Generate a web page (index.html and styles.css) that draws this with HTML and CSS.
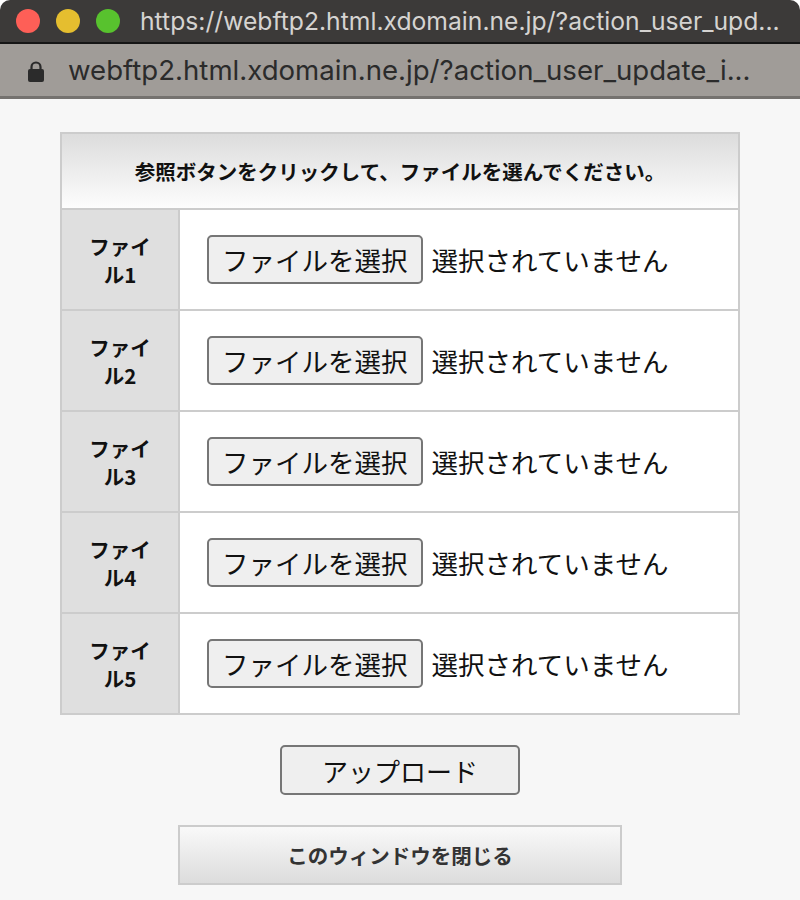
FILE: index.html
```html
<!DOCTYPE html>
<html lang="ja">
<head>
<meta charset="utf-8">
<title>webftp2</title>
<link rel="stylesheet" href="styles.css">
</head>
<body>
<div class="window">
  <header class="titlebar">
    <div class="lights">
      <span class="light red"></span>
      <span class="light yellow"></span>
      <span class="light green"></span>
    </div>
    <div class="title">https://webftp2.html.xdomain.ne.jp/?action_user_upd...</div>
  </header>
  <div class="urlbar">
    <svg class="lock" width="16" height="21" viewBox="0 0 16 21" aria-hidden="true">
      <path d="M3.5 9 V6 a4.5 4.5 0 0 1 9 0 V9" fill="none" stroke="#2b2b2b" stroke-width="2.2"/>
      <rect x="0" y="8" width="16" height="13" rx="2" fill="#2b2b2b"/>
    </svg>
    <span class="url">webftp2.html.xdomain.ne.jp/?action_user_update_i...</span>
  </div>
  <main class="page">
    <table class="upload">
      <thead>
        <tr><th colspan="2" class="head">参照ボタンをクリックして、ファイルを選んでください。</th></tr>
      </thead>
      <tbody>
        <tr><th class="label">ファイル1</th><td class="field"><div class="picker"><span class="file-btn">ファイルを選択</span><span class="file-status">選択されていません</span></div></td></tr>
        <tr><th class="label">ファイル2</th><td class="field"><div class="picker"><span class="file-btn">ファイルを選択</span><span class="file-status">選択されていません</span></div></td></tr>
        <tr><th class="label">ファイル3</th><td class="field"><div class="picker"><span class="file-btn">ファイルを選択</span><span class="file-status">選択されていません</span></div></td></tr>
        <tr><th class="label">ファイル4</th><td class="field"><div class="picker"><span class="file-btn">ファイルを選択</span><span class="file-status">選択されていません</span></div></td></tr>
        <tr><th class="label">ファイル5</th><td class="field"><div class="picker"><span class="file-btn">ファイルを選択</span><span class="file-status">選択されていません</span></div></td></tr>
      </tbody>
    </table>
    <div class="actions">
      <button class="btn-upload" type="button">アップロード</button>
    </div>
    <div class="actions close-row">
      <button class="btn-close" type="button">このウィンドウを閉じる</button>
    </div>
  </main>
</div>
</body>
</html>
```
FILE: styles.css
```css
html, body {
  margin: 0;
  padding: 0;
  background: #ffffff;
}
body {
  font-family: "Noto Sans CJK JP", "Noto Sans", sans-serif;
  color: #111;
}
.window {
  width: 800px;
  height: 900px;
  overflow: hidden;
  display: flex;
  flex-direction: column;
}
.titlebar {
  height: 42px;
  flex: 0 0 auto;
  background: #3c3a39;
  border-radius: 10px 10px 0 0;
  border-bottom: 2px solid #151515;
  display: flex;
  align-items: center;
}
.lights {
  display: flex;
  gap: 16px;
  padding-left: 16px;
}
.light {
  width: 24px;
  height: 24px;
  border-radius: 50%;
  display: block;
}
.red { background: #fe5f57; }
.yellow { background: #e5be2f; }
.green { background: #58c22e; }
.title {
  margin-left: 20px;
  font-family: "Inter", "Liberation Sans", sans-serif;
  font-size: 24.7px;
  color: #d5d3d1;
  white-space: nowrap;
  overflow: hidden;
}
.urlbar {
  height: 52px;
  flex: 0 0 auto;
  background: #a09c98;
  border-bottom: 3px solid #75726f;
  display: flex;
  align-items: center;
  padding-left: 28px;
}
.lock {
  display: block;
  margin-top: 2px;
}
.url {
  margin-left: 24px;
  font-family: "Inter", "Liberation Sans", sans-serif;
  font-size: 27.6px;
  color: #2b2b2b;
  white-space: nowrap;
  overflow: hidden;
}
.page {
  flex: 1 1 auto;
  background: #f7f7f7;
  padding-top: 33px;
}
.upload {
  width: 680px;
  box-sizing: border-box;
  margin: 0 auto;
  border-collapse: separate;
  border-spacing: 0;
  border-top: 2px solid #cccccc;
  border-left: 2px solid #cccccc;
  background: #ffffff;
}
.upload th,
.upload td {
  border-right: 2px solid #cccccc;
  border-bottom: 2px solid #cccccc;
  padding: 0;
}
.head {
  height: 74px;
  background: linear-gradient(#dcdcdc, #fdfdfd);
  font-size: 20.5px;
  font-weight: 600;
  text-align: center;
  vertical-align: middle;
  color: #111;
}
.label {
  width: 72px;
  padding: 0 22px !important;
  height: 99px;
  background: #dfdfdf;
  font-size: 20.5px;
  font-weight: 600;
  line-height: 28px;
  text-align: center;
  vertical-align: middle;
}
.field {
  height: 99px;
  vertical-align: middle;
  padding-left: 27px !important;
}
.picker {
  display: flex;
  align-items: center;
  gap: 9px;
}
.file-btn {
  display: inline-block;
  font-size: 26.5px;
  line-height: 33px;
  padding: 6px 13px;
  background: #efefef;
  border: 2px solid #767676;
  border-radius: 5px;
  color: #111;
  white-space: nowrap;
}
.file-status {
  font-size: 26.5px;
  line-height: 33px;
  white-space: nowrap;
}
.actions {
  text-align: center;
  margin-top: 30px;
}
.close-row {
  margin-top: 30px;
}
.btn-upload {
  width: 240px;
  height: 50px;
  font-family: "Noto Sans CJK JP", sans-serif;
  font-size: 26px;
  color: #111;
  background: #efefef;
  border: 2px solid #767676;
  border-radius: 5px;
  padding: 0;
  vertical-align: top;
}
.btn-close {
  width: 444px;
  height: 60px;
  font-family: "Noto Sans CJK JP", sans-serif;
  font-size: 20.5px;
  font-weight: 600;
  color: #333;
  background: linear-gradient(#f9f9f9, #dcdcdc);
  border: 2px solid #cccccc;
  border-radius: 0;
  padding: 0;
  vertical-align: top;
}
```
